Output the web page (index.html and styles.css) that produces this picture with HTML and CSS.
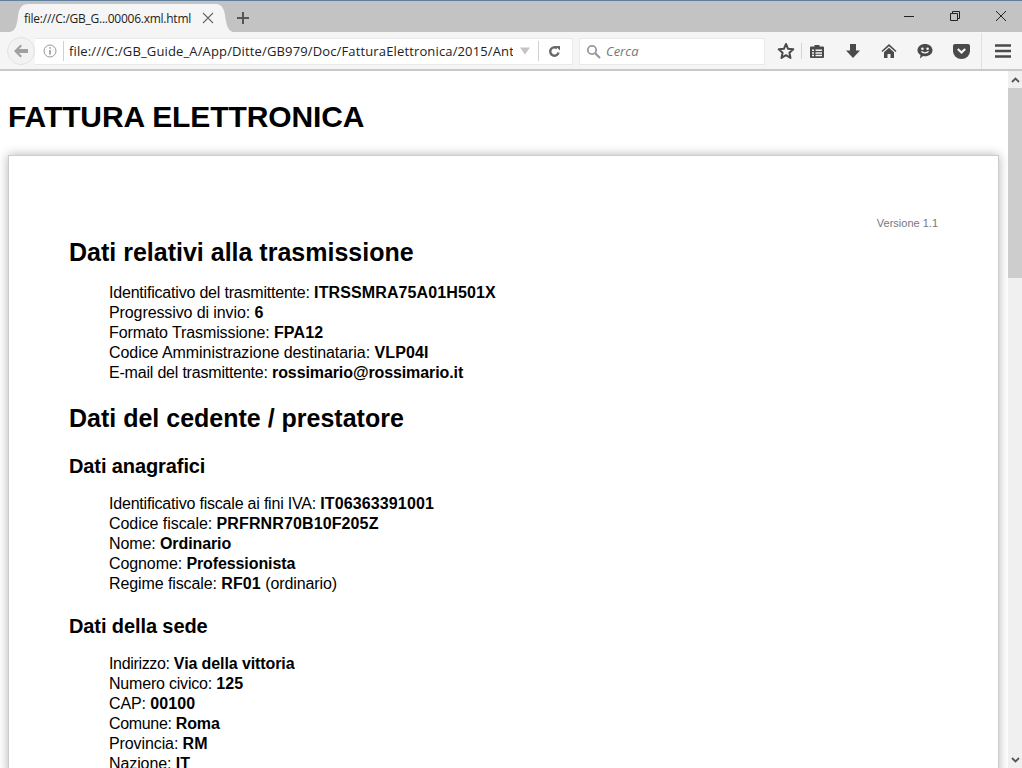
FILE: index.html
```html
<!DOCTYPE html>
<html lang="it">
<head>
<meta charset="utf-8">
<title>FATTURA ELETTRONICA</title>
<link rel="stylesheet" href="styles.css">
</head>
<body>
<div class="window">
  <header class="chrome">
    <div class="tabbar">
      <div class="tab">
        <svg class="tab-shape" width="223" height="28" viewBox="0 0 223 28"><path d="M0 28C6 27 7 20 8 12C9 4 12 0 18 0H206C212 0 214 5 215 11C216 20 218 27 223 28Z" fill="#f5f5f5"/></svg>
        <span class="tab-title">file:///C:/GB_G...00006.xml.html</span>
        <svg class="tab-close" width="12" height="12" viewBox="0 0 12 12"><path d="M1 1l10 10M11 1L1 11" stroke="#666" stroke-width="1.1" fill="none"/></svg>
      </div>
      <svg class="new-tab" width="14" height="14" viewBox="0 0 14 14"><path d="M7 1v12M1 7h12" stroke="#555" stroke-width="2" fill="none"/></svg>
      <div class="win-buttons">
        <svg width="12" height="12" viewBox="0 0 12 12"><path d="M1 6.500h10" stroke="#222" stroke-width="1" fill="none"/></svg>
        <svg width="12" height="12" viewBox="0 0 12 12"><path d="M1.500 3.500h7v7h-7zM3.500 3.500v-2h7v7h-2" stroke="#222" stroke-width="1" fill="none"/></svg>
        <svg width="12" height="12" viewBox="0 0 12 12"><path d="M1 1l10 10M11 1L1 11" stroke="#222" stroke-width="1" fill="none"/></svg>
      </div>
    </div>
    <div class="navbar">
      <div class="back">
        <svg width="16" height="14" viewBox="0 0 16 14"><path d="M7.500 0.500L1 7l6.500 6.500 1.500-1.500L6 9h9V5H6l3-3z" fill="#a0a0a0"/></svg>
      </div>
      <div class="urlbar">
        <svg class="info" width="14" height="14" viewBox="0 0 14 14"><circle cx="7" cy="7" r="6" stroke="#999" fill="none"/><path d="M7 6v4.500M7 3.200v1.600" stroke="#888" stroke-width="1.400" fill="none"/></svg>
        <span class="sep"></span>
        <span class="url">file:///C:/GB_Guide_A/App/Ditte/GB979/Doc/FatturaElettronica/2015/Ant</span>
        <svg class="drop" width="12" height="8" viewBox="0 0 12 8"><path d="M1 0.500h10L6 7.500z" fill="#c4c4c4"/></svg>
        <span class="sep"></span>
        <svg class="reload" width="13" height="13" viewBox="0 0 13 13"><path d="M10.500 7.500A4.200 4.200 0 1 1 9 3.200" stroke="#666" stroke-width="2.400" fill="none"/><path d="M7.500 1h4.500v4.500z" fill="#666"/></svg>
      </div>
      <div class="searchbar">
        <svg width="15" height="15" viewBox="0 0 15 15"><circle cx="6" cy="6" r="4.200" stroke="#999" stroke-width="1.800" fill="none"/><path d="M9 9l5 5" stroke="#999" stroke-width="2.200" fill="none"/></svg>
        <span class="search-text">Cerca</span>
      </div>
      <div class="tools">
        <svg class="t-star" width="18" height="18" viewBox="0 0 18 18"><path d="M9 2l2.100 4.800 5.200.5-3.900 3.500 1.100 5.100L9 13.200 4.500 15.900l1.100-5.100L1.700 7.300l5.200-.5z" stroke="#4a4a4a" stroke-width="2" fill="none" stroke-linejoin="round"/></svg>
        <span class="t-sep"></span>
        <svg class="t-list" width="16" height="16" viewBox="0 0 16 16"><path d="M2 3.500h3.500V2h5v1.500H14a1 1 0 0 1 1 1V14a1 1 0 0 1-1 1H2a1 1 0 0 1-1-1V4.500a1 1 0 0 1 1-1z" fill="#4a4a4a"/><path d="M3 6.500h2v1.500H3zM6.500 6.500H13v1.500H6.500zM3 9.200h2v1.500H3zM6.500 9.200H13v1.500H6.500zM3 11.800h2v1.500H3zM6.500 11.800H13v1.500H6.500z" fill="#f5f5f5"/></svg>
        <svg class="t-down" width="16" height="16" viewBox="0 0 16 16"><path d="M5 1h6v6.500h4L8 15 1 7.500h4z" fill="#4a4a4a"/></svg>
        <svg class="t-home" width="16" height="16" viewBox="0 0 16 16"><path d="M8 1L0.500 8l1 1L8 3.200 14.500 9l1-1z" fill="#4a4a4a"/><path d="M8 4.800L3 9.300V15h3.500v-4h3v4H13V9.300z" fill="#4a4a4a"/></svg>
        <svg class="t-smile" width="16" height="16" viewBox="0 0 16 16"><path d="M8 1c4.200 0 7.500 2.600 7.500 6.200S12.200 13.200 8 13.200c-.7 0-1.300-.1-1.900-.2L3 15.500l.5-3.500C1.600 10.900.5 9.200.5 7.200.5 3.600 3.800 1 8 1z" fill="#4a4a4a"/><circle cx="5.400" cy="5.800" r="1.300" fill="#f5f5f5"/><circle cx="10.600" cy="5.800" r="1.300" fill="#f5f5f5"/><path d="M4.500 8.300c1 2 6 2 7 0" stroke="#f5f5f5" stroke-width="1.300" fill="none"/></svg>
        <svg class="t-pocket" width="17" height="15" viewBox="0 0 17 15"><path d="M2 0h13a2 2 0 0 1 2 2v5a8.500 8 0 0 1-17 0V2a2 2 0 0 1 2-2z" fill="#4a4a4a"/><path d="M4.800 5l3.700 3.500L12.200 5" stroke="#f5f5f5" stroke-width="2.200" fill="none"/></svg>
        <span class="t-sep tall"></span>
        <svg class="t-menu" width="16" height="14" viewBox="0 0 16 14"><path d="M0 1.500h16M0 7h16M0 12.500h16" stroke="#4a4a4a" stroke-width="2.600" fill="none"/></svg>
      </div>
    </div>
  </header>
  <div class="viewport">
    <main class="page">
      <h1>FATTURA ELETTRONICA</h1>
      <div class="card">
        <div class="version">Versione 1.1</div>
        <h2 class="first">Dati relativi alla trasmissione</h2>
        <ul>
          <li class="tight">Identificativo del trasmittente: <b class="code">ITRSSMRA75A01H501X</b></li>
          <li>Progressivo di invio: <b class="code">6</b></li>
          <li>Formato Trasmissione: <b class="code">FPA12</b></li>
          <li class="loose">Codice Amministrazione destinataria: <b class="code">VLP04I</b></li>
          <li class="tight">E-mail del trasmittente: <b>rossimario@rossimario.it</b></li>
        </ul>
        <h2>Dati del cedente / prestatore</h2>
        <h3>Dati anagrafici</h3>
        <ul class="sub">
          <li class="tight">Identificativo fiscale ai fini IVA: <b class="code">IT06363391001</b></li>
          <li class="loose">Codice fiscale: <b class="code">PRFRNR70B10F205Z</b></li>
          <li>Nome: <b>Ordinario</b></li>
          <li>Cognome: <b>Professionista</b></li>
          <li>Regime fiscale: <b class="code">RF01</b> (ordinario)</li>
        </ul>
        <h3>Dati della sede</h3>
        <ul class="sub">
          <li class="tightest">Indirizzo: <b>Via della vittoria</b></li>
          <li class="tight">Numero civico: <b class="code">125</b></li>
          <li>CAP: <b class="code">00100</b></li>
          <li class="tightest">Comune: <b>Roma</b></li>
          <li>Provincia: <b class="code">RM</b></li>
          <li>Nazione: <b class="code">IT</b></li>
        </ul>
      </div>
    </main>
    <aside class="scrollbar">
      <svg class="sb-arrow" width="9" height="6" viewBox="0 0 9 6"><path d="M1 5l3.500-3.500L8 5" stroke="#555" stroke-width="1.800" fill="none"/></svg>
      <div class="thumb"></div>
      <div class="track"></div>
      <svg class="sb-arrow" width="9" height="6" viewBox="0 0 9 6"><path d="M1 1l3.500 3.500L8 1" stroke="#555" stroke-width="1.800" fill="none"/></svg>
    </aside>
  </div>
</div>
</body>
</html>
```
FILE: styles.css
```css
* { box-sizing: border-box; }
html, body { margin: 0; padding: 0; height: 100%; overflow: hidden; }
body { font-family: "Liberation Sans", Arial, sans-serif; color: #000; background: #fff; }
.window { display: flex; flex-direction: column; height: 768px; }

.chrome { flex: none; height: 71px; font-family: "Open Sans", "Noto Sans", sans-serif; }
.tabbar { height: 32px; background: #c3c3c3; border-top: 1px solid #5f7f9f; display: flex; align-items: center; padding-left: 10px; }
.tab { position: relative; width: 223px; height: 28px; margin-top: 3px; display: flex; align-items: center; padding-left: 14px; font-size: 12px; color: #222; flex: none; }
.tab-shape { position: absolute; left: 0; top: 0; }
.tab-title { position: relative; width: 178px; white-space: nowrap; letter-spacing: -0.25px; }
.tab-close { position: relative; }
.new-tab { margin-left: 3px; margin-top: 3px; }
.win-buttons { margin-left: auto; display: flex; gap: 34px; padding-right: 15px; margin-top: -2px; }

.navbar { height: 39px; background: #f5f5f5; border-bottom: 2px solid #c9c9c9; display: flex; align-items: center; padding: 1px 0 0 7px; }
.back { width: 28px; height: 28px; border-radius: 50%; background: #f2f2f2; border: 1px solid #e2e2e2; display: flex; align-items: center; justify-content: center; flex: none; }
.urlbar { width: 538px; height: 27px; background: #fff; border: 1px solid #e9e9e9; border-left: 0; display: flex; align-items: center; padding-left: 8px; flex: none; }
.info { flex: none; }
.sep { width: 1px; height: 20px; background: #d0d0d0; margin-left: 6px; flex: none; }
.url { width: 444px; margin-left: 5px; overflow: hidden; white-space: nowrap; font-size: 13px; letter-spacing: 0.14px; color: #222; flex: none; }
.drop { margin-left: 6px; flex: none; }
.urlbar .drop + .sep { margin-left: 7px; }
.reload { margin-left: 9px; flex: none; }
.searchbar { width: 186px; height: 27px; margin-left: 6px; background: #fff; border: 1px solid #e9e9e9; display: flex; align-items: center; padding-left: 6px; flex: none; }
.search-text { margin-left: 5px; font-size: 13px; font-style: italic; color: #777; }
.tools { display: flex; align-items: center; margin-left: 12px; }
.t-sep { width: 1px; height: 16px; background: #d5d5d5; margin-left: 6px; }
.t-sep.tall { height: 36px; margin-left: 11px; background: #e0e0e0; }
.t-list { margin-left: 7px; }
.t-down { margin-left: 20px; }
.t-home { margin-left: 20px; }
.t-smile { margin-left: 20px; }
.t-pocket { margin-left: 20px; }
.t-menu { margin-left: 13px; }

.viewport { flex: 1; display: flex; min-height: 0; overflow: hidden; }
.page { flex: 1; min-width: 0; overflow: hidden; padding: 0 8px; }
h1 { margin: 29px 0 0; font-size: 30px; line-height: 34px; font-weight: bold; letter-spacing: -0.1px; }
.card { width: 991px; margin: 21px 0 0; padding: 61px 60px 0 60px; background: #fff; border: 1px solid #ccc; box-shadow: 0 0 10px rgba(0,0,0,.3); }
.version { text-align: right; font-size: 11px; line-height: 13px; color: #777; }
h2 { margin: 21px 0 0; font-size: 25px; line-height: 28px; font-weight: bold; }
h2.first { margin-top: 8px; }
h3 { margin: 20px 0 0; font-size: 20px; line-height: 24px; font-weight: bold; letter-spacing: -0.1px; }
h2 + h3 { margin-top: 22px; }
ul { list-style: none; margin: 17px 0 0; padding: 0 0 0 40px; font-size: 16px; line-height: 20px; letter-spacing: -0.1px; }
ul.sub { margin-top: 16px; }
li.tight { letter-spacing: -0.2px; }
li.tightest { letter-spacing: -0.33px; }
li.loose { letter-spacing: -0.06px; }
b { letter-spacing: -0.1px; }
b.code { letter-spacing: 0.12px; }
.scrollbar { flex: none; width: 14px; display: flex; flex-direction: column; align-items: center; background: #f0f0f0; }
.sb-arrow { flex: none; margin: 6px 0 5px; }
.thumb { width: 100%; height: 190px; background: #cdcdcd; flex: none; }
.track { flex: 1; }
```
